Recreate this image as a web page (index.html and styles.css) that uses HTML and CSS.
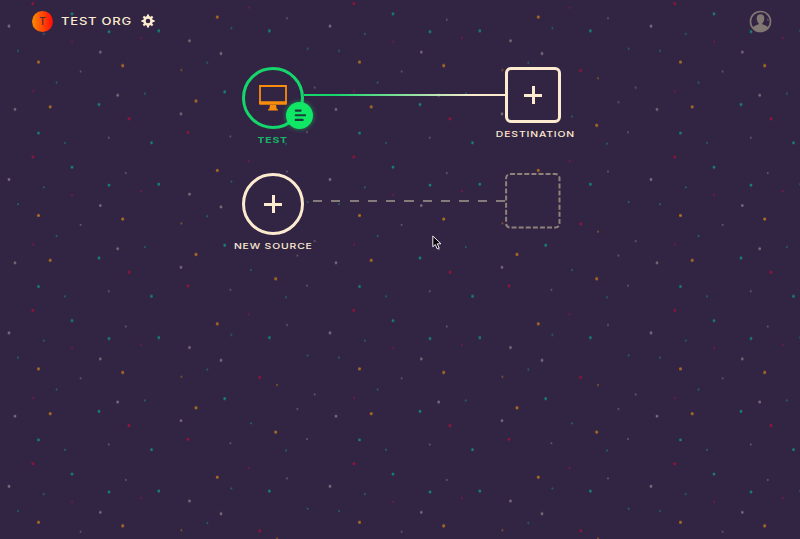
FILE: index.html
```html
<!DOCTYPE html>
<html lang="en">
<head>
<meta charset="utf-8">
<title>Test Org</title>
<link rel="stylesheet" href="styles.css">
</head>
<body>
<svg class="sky" aria-hidden="true">
  <defs>
    <pattern id="stars" width="321" height="153.4" patternUnits="userSpaceOnUse" patternTransform="translate(0 -106.8)">
      <g class="star amber">
        <path d="M38.5 15.4h0M122.7 19h0M196 54.4h0M50.2 60.3h0M275.7 78.7h0M217.3 123.7h0"/>
        <path class="faint" d="M181.4 23.3h0M277 31.6h0"/>
      </g>
      <g class="star teal">
        <path d="M99 58h0M38.5 86.6h0M151.5 96.3h0M72 120.7h0M109 138.6h0M158.8 137.7h0M269.4 137.7h0M224.7 45.3h0"/>
        <path class="faint" d="M18 4.3h0M56.6 36h0M144.8 47h0M65 96.3h0M43.8 140.7h0M251 70h0M286 97h0M231.4 135h0M207.3 16.3h0M307.7 2h0"/>
      </g>
      <g class="star red">
        <path d="M129 72.2h0M188 86h0M32.8 110.4h0M259.7 24h0"/>
        <path class="faint" d="M33 44.6h0M141 144.7h0M72 148.5h0M248.7 114.4h0"/>
      </g>
      <g class="star gray">
        <path d="M117.7 48.7h0M15 62.8h0M181 67.3h0M9 133h0M221 7h0M189.5 147.6h0M100.3 5.6h0"/>
        <path class="faint" d="M80.6 25h0M108.8 91.2h0M125.8 126.6h0M307 85.7h0M230.4 90h0M287 125h0M297.4 55.6h0M314.7 41h0"/>
      </g>
    </pattern>
  </defs>
  <rect width="100%" height="100%" fill="url(#stars)"/>
</svg>

<header class="topbar">
  <div class="org">
    <span class="org-logo">T</span>
    <span class="org-name"><span class="wide">TEST ORG</span></span>
    <svg class="gear" viewBox="0 0 14 14">
      <circle cx="7" cy="7" r="3.6" fill="none" stroke="currentColor" stroke-width="2.6"/>
      <path d="M7 .5v2.6M7 10.9v2.6M.5 7h2.6M10.9 7h2.6M2.4 2.4l1.9 1.9M9.7 9.7l1.9 1.9M11.6 2.4L9.7 4.3M4.3 9.7l-1.9 1.9" stroke="currentColor" stroke-width="2.1"/>
    </svg>
  </div>
  <svg class="avatar" viewBox="0 0 22 22">
    <circle cx="11" cy="11" r="9.6" fill="none" stroke="currentColor" stroke-width="1.5"/>
    <path d="M11 4c-2.4 0-3.7 1.5-3.6 3.8 0 2 .8 3.9 1.9 4.8v1.1c-1.7.8-4.4 1.1-5.6 3.1 1.7 2.4 4.3 3.7 7.3 3.7s5.6-1.3 7.3-3.7c-1.2-2-3.9-2.3-5.6-3.1v-1.1c1.1-.9 1.9-2.8 1.9-4.8.1-2.3-1.2-3.8-3.6-3.8z" fill="currentColor"/>
  </svg>
</header>

<main class="pipelines">
  <section class="pipeline">
    <div class="node">
      <div class="disc active">
        <svg class="monitor" viewBox="0 0 30 27">
          <path d="M2 1h26v17H2z" fill="none" stroke="currentColor" stroke-width="1.8"/>
          <path d="M1 16.2h28v2.6q0 1-1 1H2q-1 0-1-1zM12 20h6l.8 4.2H20v1.4H10v-1.4h1.2z" fill="currentColor"/>
        </svg>
        <span class="badge">
          <svg viewBox="0 0 27 27"><path d="M9.7 8.6h5M9.7 13.2h9.4M9.7 17.9h7" stroke="currentColor" stroke-width="2.1" stroke-linecap="round"/></svg>
        </span>
      </div>
      <div class="label green"><span class="wide">TEST</span></div>
    </div>
    <div class="link solid"></div>
    <div class="node">
      <div class="box"><i class="plus"></i></div>
      <div class="label destination"><span class="wide">DESTINATION</span></div>
    </div>
  </section>
  <section class="pipeline">
    <div class="node">
      <div class="disc"><i class="plus"></i></div>
      <div class="label"><span class="wide">NEW SOURCE</span></div>
    </div>
    <div class="link dashed"></div>
    <div class="node">
      <svg class="slot" viewBox="0 0 56 56"><rect x="1.1" y="1.1" width="53.4" height="53.4" rx="4"/></svg>
    </div>
  </section>
</main>

<svg class="cursor" viewBox="0 0 10 15"><path d="M.8 1v10.8l2.5-2.3 1.8 4.2 2-.9-1.8-4H9z"/></svg>
</body>
</html>
```

FILE: styles.css
```css
* { box-sizing: border-box; }

body {
  margin: 0;
  height: 539px;
  overflow: hidden;
  background: #322544;
  color: #fdebd0;
  font-family: Inter, "Liberation Sans", sans-serif;
}

.sky {
  position: absolute;
  inset: 0;
  width: 100%;
  height: 100%;
  z-index: -1;
}

.star { stroke-width: 2.8; stroke-linecap: round; opacity: .72; }
.star .faint { stroke-width: 2; opacity: .7; }
.amber { stroke: #d98512; stroke-width: 3.1; }
.teal { stroke: #08a58a; }
.red { stroke: #c00835; }
.gray { stroke: #95868c; }

.topbar {
  display: flex;
  justify-content: space-between;
  align-items: center;
  height: 42px;
  padding: 0 28px 0 32px;
}

.org { display: flex; align-items: center; }

.org-logo {
  width: 21px;
  height: 21px;
  border-radius: 50%;
  background: linear-gradient(90deg, #ff8a00, #ff0a08);
  color: #5e2630;
  font-size: 10px;
  font-weight: 500;
  line-height: 21px;
  text-align: center;
}

.org-name {
  width: 71px;
  margin: 0 9px 0 8px;
  font-size: 10px;
  font-weight: 500;
  line-height: 16px;
  letter-spacing: .6px;
  white-space: nowrap;
}

.wide { display: inline-block; transform: scaleX(1.3); transform-origin: 0 50%; }

.gear { width: 14px; height: 14px; }
.avatar { width: 23px; height: 23px; color: #827873; }

.pipelines { padding: 25px 0 0 242px; }

.pipeline {
  display: grid;
  grid-template-columns: 62px 201px 56px;
  height: 106px;
}

.node { display: flex; flex-direction: column; align-items: center; }

.disc {
  position: relative;
  display: flex;
  align-items: center;
  justify-content: center;
  width: 62px;
  height: 62px;
  border: 3px solid #fdebd0;
  border-radius: 50%;
  background: #322544;
}

.disc.active { border-color: #14d66b; color: #f88c0c; }

.monitor { width: 30px; height: 27px; }

.badge {
  position: absolute;
  right: -12px;
  bottom: -3px;
  width: 27px;
  height: 27px;
  border-radius: 50%;
  background: #10e865;
  color: #173d3c;
  box-shadow: 0 0 5px rgba(16, 232, 101, .55);
}

.badge svg { display: block; }

.box {
  display: flex;
  align-items: center;
  justify-content: center;
  width: 56px;
  height: 56px;
  border: 3px solid #fdebd0;
  border-radius: 6px;
  background: #322544;
}

.plus {
  width: 18px;
  height: 18px;
  background:
    linear-gradient(#fdebd0, #fdebd0) center / 18px 3px no-repeat,
    linear-gradient(#fdebd0, #fdebd0) center / 3px 18px no-repeat;
}

.label {
  margin-top: 4px;
  font-size: 8px;
  font-weight: 500;
  line-height: 14px;
  letter-spacing: .65px;
  white-space: nowrap;
}

.label .wide { transform-origin: 50% 50%; }
.label.green { color: #18b568; font-weight: 700; }
.destination { margin: 4px 0 0 5px; }

.link { height: 2px; margin-top: 27px; }
.solid { background: linear-gradient(90deg, #14d66b 15%, #fdebd0 85%); }
.dashed {
  margin-left: 9px;
  background: repeating-linear-gradient(90deg, #857b7a 0 9.2px, transparent 9.2px 18.3px);
}

.slot {
  width: 56px;
  height: 56px;
  fill: #322544;
  stroke: #8e8279;
  stroke-width: 2;
  stroke-dasharray: 5 2.1;
}

.cursor {
  position: absolute;
  left: 432px;
  top: 235px;
  width: 10px;
  height: 15px;
  fill: #08060c;
  stroke: #efeaf0;
  stroke-width: 1;
}
```
